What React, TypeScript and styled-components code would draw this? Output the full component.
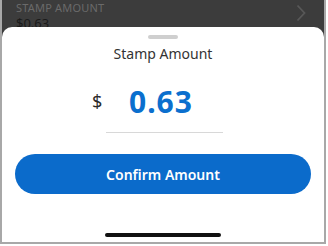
import React from 'react';
import styled, {createGlobalStyle} from 'styled-components';

const GlobalStyle = createGlobalStyle`
  html, body {
    margin: 0;
    padding: 0;
    background: #ffffff;
  }
  body {
    font-family: 'Noto Sans', 'Liberation Sans', sans-serif;
  }
`;

const StampAmountSheet: React.FC = () => {
    return (
        <Screen>
            <BackdropRow>
                <RowText>
                    <RowLabel>STAMP AMOUNT</RowLabel>
                    <RowValue>$0.63</RowValue>
                </RowText>
                <Chevron viewBox="0 0 10 18">
                    <path d="M1.5 1.5 L8.5 9 L1.5 16.5" fill="none" stroke="#585858" strokeWidth="1.8"/>
                </Chevron>
            </BackdropRow>
            <Sheet>
                <Handle/>
                <SheetTitle>Stamp Amount</SheetTitle>
                <AmountField>
                    <Currency>$</Currency>
                    <AmountValue>0.63</AmountValue>
                </AmountField>
                <Underline/>
                <ConfirmButton>Confirm Amount</ConfirmButton>
                <HomeIndicator/>
            </Sheet>
        </Screen>
    );
};

export default function App() {
    return (
        <>
            <GlobalStyle/>
            <StampAmountSheet/>
        </>
    );
}

const Screen = styled.div`
  width: 326px;
  height: 244px;
  box-sizing: border-box;
  border: 2px solid #a8a8a8;
  border-top: none;
  background: #3c3c3c;
  display: flex;
  flex-direction: column;
  overflow: hidden;
`;

const BackdropRow = styled.div`
  height: 27px;
  flex-shrink: 0;
  display: flex;
  align-items: flex-end;
  justify-content: space-between;
  padding: 0 18px 0 14px;
  overflow: hidden;
`;

const RowText = styled.div`
  display: flex;
  flex-direction: column;
  margin-bottom: -4px;
`;

const RowLabel = styled.span`
  font-size: 11px;
  line-height: 15px;
  color: #6a6a6a;
  letter-spacing: 0.2px;
`;

const RowValue = styled.span`
  font-size: 13px;
  line-height: 16px;
  color: #1a1a1a;
`;

const Chevron = styled.svg`
  width: 10px;
  height: 18px;
  margin-bottom: 5px;
`;

const Sheet = styled.div`
  flex: 1;
  background: #ffffff;
  border-radius: 10px 10px 0 0;
  display: flex;
  flex-direction: column;
  align-items: center;
  padding-top: 8px;
`;

const Handle = styled.div`
  width: 30px;
  height: 4px;
  border-radius: 2px;
  background: #cfcfcf;
`;

const SheetTitle = styled.div`
  margin-top: 5px;
  font-size: 14px;
  line-height: 20px;
  color: #333333;
`;

const AmountField = styled.div`
  margin-top: 17px;
  display: flex;
  align-items: center;
  width: 136px;
  margin-left: -6px;
  height: 40px;
`;

const Currency = styled.span`
  font-size: 18px;
  font-weight: 400;
  color: #2a2a2a;
  width: 37px;
`;

const AmountValue = styled.span`
  font-size: 30px;
  font-weight: 700;
  color: #0b6fce;
  letter-spacing: 1px;
`;

const Underline = styled.div`
  margin-top: 11px;
  width: 117px;
  height: 1px;
  margin-left: 3px;
  background: #d8d8d8;
`;

const ConfirmButton = styled.button`
  margin-top: 21px;
  width: 296px;
  height: 40px;
  border: none;
  border-radius: 20px;
  background: #0b6bcb;
  color: #ffffff;
  font-family: 'Noto Sans', 'Liberation Sans', sans-serif;
  font-size: 14px;
  font-weight: 600;
  cursor: pointer;
`;

const HomeIndicator = styled.div`
  margin-top: 39px;
  width: 116px;
  height: 4px;
  border-radius: 2px;
  background: #111111;
`;
